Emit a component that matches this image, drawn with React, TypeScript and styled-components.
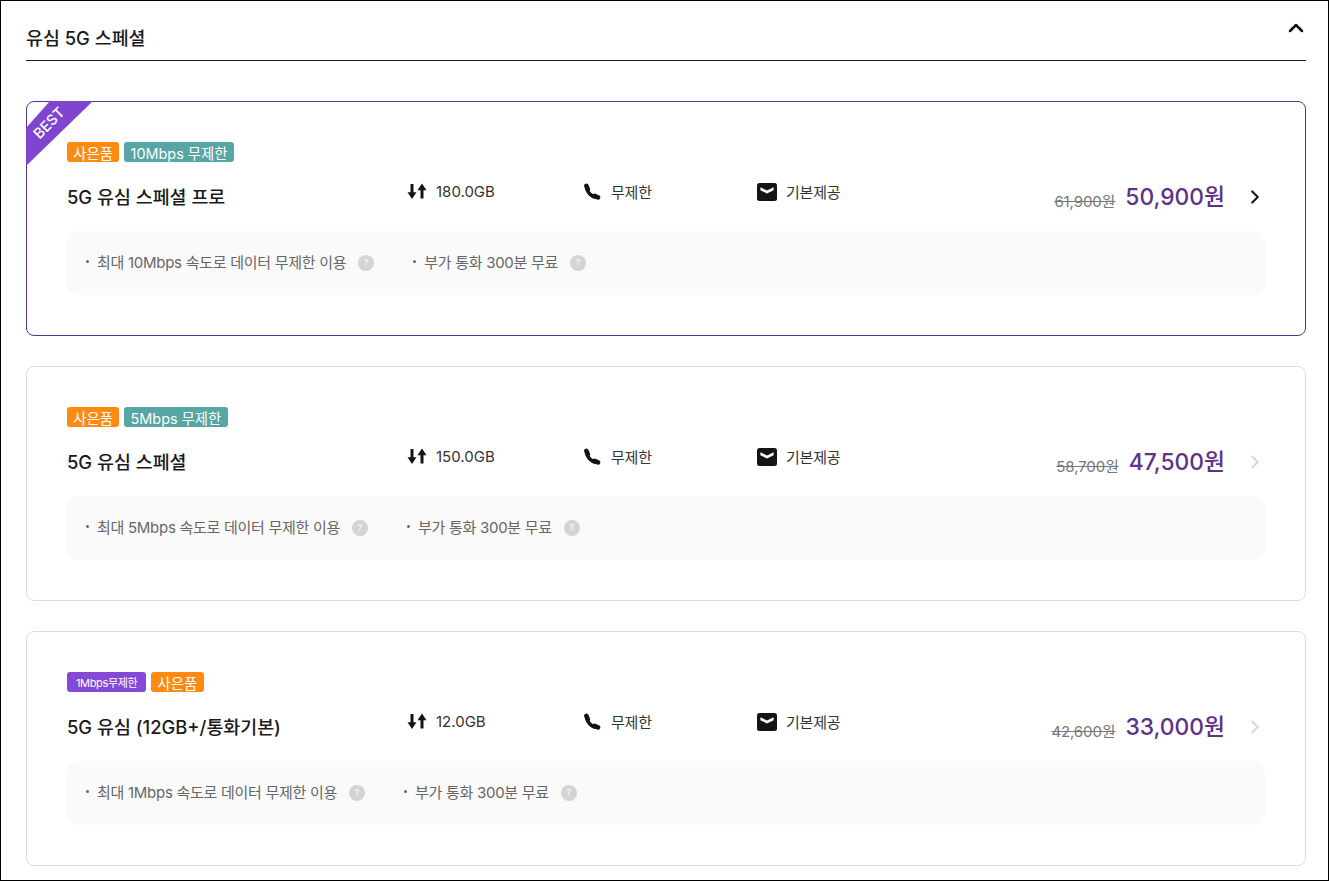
import React from 'react'
import styled, { createGlobalStyle } from 'styled-components'
import { ChevronRight, ChevronUp } from 'lucide-react'

const GlobalStyle = createGlobalStyle`
  * { box-sizing: border-box; }
  html, body { margin: 0; padding: 0; background: #fff; }
  body { font-family: Inter, "Noto Sans CJK KR", sans-serif; color: #1a1a1a; }
`

const Frame = styled.div`
  width: 1329px;
  height: 881px;
  overflow: hidden;
  border: 1px solid #000;
  padding: 0 22px 0 25px;
`

const Header = styled.div`
  height: 60px;
  display: flex;
  align-items: center;
  justify-content: space-between;
  border-bottom: 1px solid #1a1a1a;
  padding-top: 13px;
`

const HeaderTitle = styled.h2`
  margin: 0;
  font-size: 18.4px;
  font-weight: 500;
  color: #1a1a1a;
`

const Collapse = styled.span`
  display: flex;
  margin-bottom: 18px;
  margin-right: -2px;
  color: #111;
`

const CardList = styled.div`
  display: flex;
  flex-direction: column;
  gap: 30px;
  margin-top: 40px;
`

const Card = styled.div<{ $best?: boolean }>`
  position: relative;
  height: 235px;
  padding: 40px 40px 0;
  border: 1px solid ${p => (p.$best ? '#5f3288' : '#dcdcdc')};
  border-radius: 8px;
`

const Ribbon = styled.div`
  position: absolute;
  top: -1px;
  left: -1px;
  width: 67px;
  height: 65px;
  background: #7f45cf;
  clip-path: polygon(24px 0, 67px 0, 0 65px, 0 27px);
`

const RibbonText = styled.span`
  position: absolute;
  top: 14px;
  left: 1px;
  width: 44px;
  text-align: center;
  font-size: 14.5px;
  font-weight: 500;
  line-height: 16px;
  color: #fff;
  transform: rotate(-45deg);
`

const Tags = styled.div`
  display: flex;
  gap: 5px;
  height: 20px;
`

const Tag = styled.span<{ $color: string; $small?: boolean }>`
  display: flex;
  align-items: center;
  height: 20px;
  padding: 0 ${p => (p.$small ? 9 : 6.3)}px;
  border-radius: 3px;
  background: ${p => p.$color};
  color: #fff;
  font-size: ${p => (p.$small ? 11 : 14.4)}px;
  letter-spacing: ${p => (p.$small ? -0.35 : 0)}px;
  white-space: nowrap;
`

const Row = styled.div`
  display: flex;
  align-items: center;
  height: 48px;
  margin-top: 10px;
`

const PlanName = styled.div`
  width: 340px;
  font-size: 18.4px;
  font-weight: 550;
  color: #1a1a1a;
`

const Specs = styled.div`
  display: flex;
  padding-bottom: 9px;
`

const Spec = styled.div<{ $latin?: boolean }>`
  display: flex;
  align-items: center;
  gap: 9px;
  width: 175px;
  font-size: 15px;
  letter-spacing: ${p => (p.$latin ? 0 : -0.2)}px;
  color: #333;
`

const SpecIcon = styled.span`
  display: flex;
  align-items: center;
  justify-content: center;
  width: 20px;
  height: 20px;
  color: #141414;
`

const Prices = styled.div`
  display: flex;
  align-items: center;
  gap: 10px;
  margin-left: auto;
  padding-bottom: 2px;
`

const OldPrice = styled.span`
  font-size: 15px;
  color: #777;
  text-decoration: line-through;
  letter-spacing: -0.1px;
  margin-top: 10px;
`

const Price = styled.span`
  font-size: 22.8px;
  font-weight: 550;
  color: #5f3288;
`

const Arrow = styled.span<{ $active?: boolean }>`
  display: flex;
  width: 41px;
  margin-right: -1px;
  padding-top: 1px;
  justify-content: flex-end;
  color: ${p => (p.$active ? '#1a1a1a' : '#d8d8d8')};
`

const Detail = styled.div`
  display: flex;
  align-items: center;
  height: 64px;
  margin-top: 11px;
  padding: 0 0 3px 19px;
  gap: 39px;
  border-radius: 10px;
  background: #fafafa;
`

const DetailItem = styled.div`
  display: flex;
  align-items: center;
  font-size: 15px;
  letter-spacing: -0.28px;
  color: #666;
`

const Dot = styled.span`
  width: 3px;
  height: 3px;
  margin: 0 8px 0 0;
  border-radius: 50%;
  background: #666;
`

const Help = styled.span`
  display: flex;
  align-items: center;
  justify-content: center;
  width: 16px;
  height: 16px;
  margin: 2px 0 0 12px;
  border-radius: 50%;
  background: #d4d4d4;
  color: #f2f2f2;
  font-size: 9px;
  font-weight: 700;
  letter-spacing: 0;
`

const DataIcon = () => (
  <svg width="20" height="17" viewBox="0 0 20 17" fill="currentColor">
    <path d="M3.5 1h3v8.2h3L5 16 .5 9.2h3z" />
    <path d="M13.5 15.4h3V7.2h3L15 .4 10.5 7.2h3z" />
  </svg>
)

const PhoneIcon = () => (
  <svg width="18" height="18" viewBox="0 0 18 18" fill="none" stroke="currentColor" strokeLinecap="round">
    <path d="M3.6 3.5C3.6 9 8.6 14.2 14.5 14.4" strokeWidth="3.4" />
    <path d="M3.4 2.8l1.4 3.6" strokeWidth="4.6" />
    <path d="M11.6 13l3.4 1.4" strokeWidth="4.6" />
  </svg>
)

const MailIcon = () => (
  <svg width="20" height="18" viewBox="0 0 20 18">
    <rect width="20" height="18" rx="2.5" fill="currentColor" />
    <path d="M3.4 4.2 10 7.4l6.6-3.2v3L10 10.6 3.4 7.2z" fill="#fff" />
  </svg>
)

type Plan = {
  name: string
  tags: { label: string; color: string; small?: boolean }[]
  data: string
  oldPrice: string
  price: string
  details: string[]
  best?: boolean
}

const ORANGE = '#ff8a12'
const TEAL = '#57a5a5'
const PURPLE = '#8549d6'

const plans: Plan[] = [
  {
    name: '5G 유심 스페셜 프로',
    tags: [{ label: '사은품', color: ORANGE }, { label: '10Mbps 무제한', color: TEAL }],
    data: '180.0GB',
    oldPrice: '61,900원',
    price: '50,900원',
    details: ['최대 10Mbps 속도로 데이터 무제한 이용', '부가 통화 300분 무료'],
    best: true
  },
  {
    name: '5G 유심 스페셜',
    tags: [{ label: '사은품', color: ORANGE }, { label: '5Mbps 무제한', color: TEAL }],
    data: '150.0GB',
    oldPrice: '58,700원',
    price: '47,500원',
    details: ['최대 5Mbps 속도로 데이터 무제한 이용', '부가 통화 300분 무료']
  },
  {
    name: '5G 유심 (12GB+/통화기본)',
    tags: [{ label: '1Mbps무제한', color: PURPLE, small: true }, { label: '사은품', color: ORANGE }],
    data: '12.0GB',
    oldPrice: '42,600원',
    price: '33,000원',
    details: ['최대 1Mbps 속도로 데이터 무제한 이용', '부가 통화 300분 무료']
  }
]

const App = () => (
  <Frame>
    <GlobalStyle />
    <Header>
      <HeaderTitle>유심 5G 스페셜</HeaderTitle>
      <Collapse><ChevronUp size={24} strokeWidth={2.5} /></Collapse>
    </Header>
    <CardList>
      {plans.map(plan => (
        <Card key={plan.name} $best={plan.best}>
          {plan.best && <Ribbon><RibbonText>BEST</RibbonText></Ribbon>}
          <Tags>
            {plan.tags.map(tag => (
              <Tag key={tag.label} $color={tag.color} $small={tag.small}>{tag.label}</Tag>
            ))}
          </Tags>
          <Row>
            <PlanName>{plan.name}</PlanName>
            <Specs>
              <Spec $latin><SpecIcon><DataIcon /></SpecIcon>{plan.data}</Spec>
              <Spec><SpecIcon><PhoneIcon /></SpecIcon>무제한</Spec>
              <Spec><SpecIcon><MailIcon /></SpecIcon>기본제공</Spec>
            </Specs>
            <Prices>
              <OldPrice>{plan.oldPrice}</OldPrice>
              <Price>{plan.price}</Price>
            </Prices>
            <Arrow $active={plan.best}><ChevronRight size={22} strokeWidth={2.4} /></Arrow>
          </Row>
          <Detail>
            {plan.details.map(text => (
              <DetailItem key={text}><Dot />{text}<Help>?</Help></DetailItem>
            ))}
          </Detail>
        </Card>
      ))}
    </CardList>
  </Frame>
)

export default App
